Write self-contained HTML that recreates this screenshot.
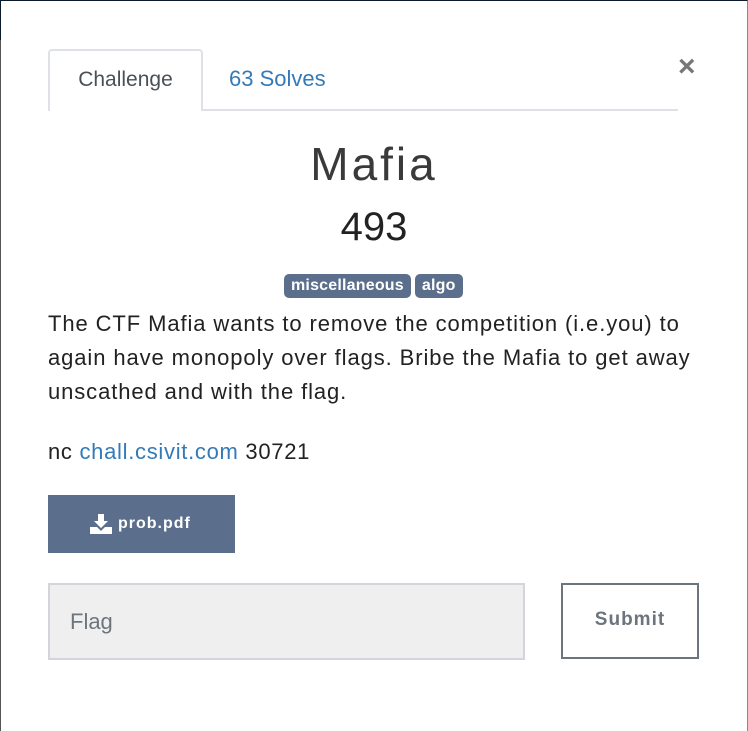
<!DOCTYPE html>
<html><head><style>
*{margin:0;padding:0;box-sizing:border-box}
body{width:748px;height:731px;background:#fff;font-family:"Liberation Sans",sans-serif;position:relative;overflow:hidden;color:#212529}
.frame{position:absolute;left:0;top:0;width:748px;height:731px;border-left:1px solid #555;border-right:1px solid #888;border-top:1px solid #0a1a2a}
.topl{position:absolute;left:0;top:0;width:1px;height:40px;background:#0a1a2a}
.tabline{position:absolute;left:48px;top:109px;width:630px;height:2px;background:#dee2e6}
.tab{position:absolute;left:48px;top:49px;width:155px;height:62px;border:2px solid #dee2e6;border-bottom:none;border-radius:4px 4px 0 0;background:#fff;font-size:21px;color:#495057;text-align:center;line-height:58px}
.solves{position:absolute;left:229px;top:66px;font-size:22px;color:#337ab7}
.close{position:absolute;left:678px;top:50px;font-size:30px;color:#777;font-weight:bold}
.title{position:absolute;left:0;width:748px;text-align:center;top:137px;font-size:46px;letter-spacing:3px;color:#3a3a3a}
.pts{position:absolute;left:0;width:748px;text-align:center;top:205px;font-size:40px;color:#222}
.badges{position:absolute;left:284px;top:274px;white-space:nowrap}
.b{display:inline-block;background:#5b6f8c;color:#fff;font-weight:bold;font-size:16px;padding:0 7px;height:24px;line-height:24px;border-radius:5px;margin-right:4px;letter-spacing:0.2px}
.desc{position:absolute;left:48px;top:307px;font-size:22px;line-height:34px;white-space:nowrap;color:#222;letter-spacing:0.9px}
.nc{position:absolute;left:48px;top:439px;font-size:22px;color:#222;letter-spacing:0.7px}
.nc a{color:#337ab7;text-decoration:none}
.dl{position:absolute;left:48px;top:495px;width:187px;height:58px;background:#5b6f8c;color:#fff;font-weight:bold;font-size:16px;letter-spacing:1px;line-height:58px;padding-left:70px}
.dl svg{position:absolute;left:42px;top:19px}
.inp{position:absolute;left:48px;top:583px;width:477px;height:77px;background:#efefef;border:2px solid #d2d6da;font-size:22px;color:#6c757d;padding-left:20px;line-height:73px}
.sub{position:absolute;left:561px;top:583px;width:138px;height:76px;border:2px solid #6c757d;font-size:19px;font-weight:bold;color:#6c757d;text-align:center;line-height:70px;letter-spacing:1px}
</style></head><body>
<div class="frame"></div><div class="topl"></div>
<div class="tabline"></div>
<div class="tab">Challenge</div>
<div class="solves">63 Solves</div>
<div class="close">×</div>
<div class="title">Mafia</div>
<div class="pts">493</div>
<div class="badges"><span class="b">miscellaneous</span><span class="b">algo</span></div>
<div class="desc">The CTF Mafia wants to remove the competition (i.e.you) to<br>again have monopoly over flags. Bribe the Mafia to get away<br>unscathed and with the flag.</div>
<div class="nc">nc <a>chall.csivit.com</a> 30721</div>
<div class="dl"><svg width="22" height="20" viewBox="0 0 22 20"><path d="M8 0h6v7h4l-7 7-7-7h4z" fill="#fff"/><path d="M0 13h7l4 4 4-4h7v7H0z" fill="#fff"/></svg>prob.pdf</div>
<div class="inp">Flag</div>
<div class="sub">Submit</div>
</body></html>
